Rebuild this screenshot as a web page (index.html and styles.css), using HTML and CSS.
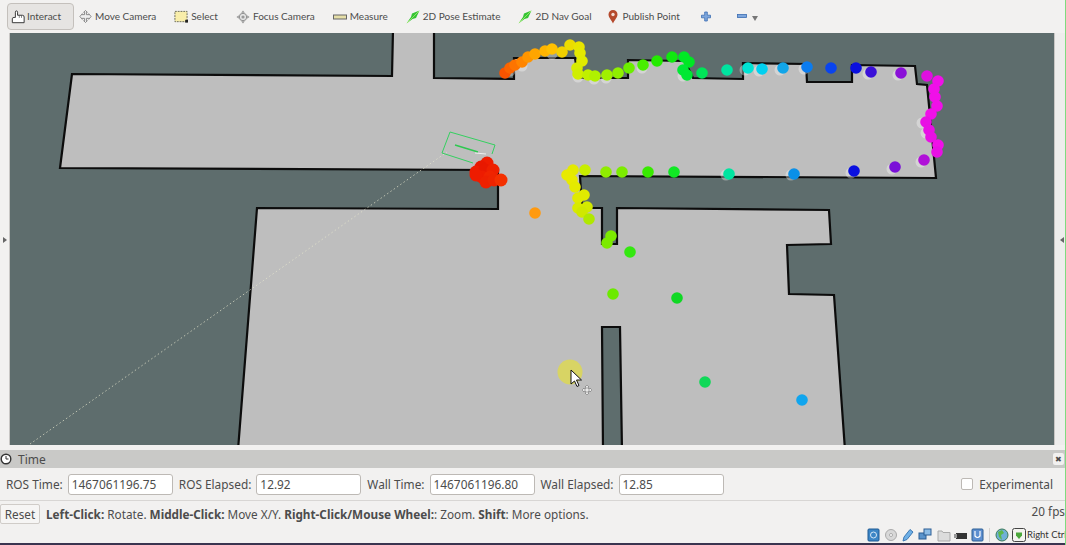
FILE: index.html
```html
<!DOCTYPE html>
<html lang="en">
<head>
    <meta charset="UTF-8">
    <meta name="viewport" content="width=device-width, initial-scale=1.0">
    <title>RViz</title>
    <link rel="stylesheet" href="styles.css">
</head>
<body>
    <div class="app">
        <div class="toolbar">
            <div class="tool tool-active">
                <svg class="icon" viewBox="0 0 16 16"><path d="M1.500 14.500v-4.500q0-1.500 2-1.500h1.500v-6q0-1.500 1.200-1.500t1.300 1.500v3.500h5.500q2 0 2 2v6.500z" fill="#fff" stroke="#333" stroke-width="1.100"/><path d="M9.500 6v3M12 6v3" stroke="#555" stroke-width=".8"/></svg>
                <span>Interact</span>
            </div>
            <div class="tool">
                <svg class="icon icon-move" viewBox="0 0 14 14"><path d="M7 .5l2 2H8v2.500h2.500V4l2.500 3-2.500 3V9H8v2.500h1l-2 2-2-2h1V9H3.500v1L1 7l2.500-3v1H6V2.500H5z" fill="#eee" stroke="#777" stroke-width=".9"/></svg>
                <span>Move Camera</span>
            </div>
            <div class="tool">
                <svg class="icon" viewBox="0 0 15 14"><rect x="1" y="1" width="13" height="11" fill="#f9eeaa" stroke="#665" stroke-width="1" stroke-dasharray="2 1"/><rect x="12" y="10" width="3" height="3" fill="#222"/></svg>
                <span>Select</span>
            </div>
            <div class="tool">
                <svg class="icon" viewBox="0 0 15 15"><path d="M7.500 .5l2 2.500h-4zM7.500 14.500l2-2.500h-4zM.5 7.500l2.500-2v4zM14.500 7.500l-2.500-2v4z" fill="#999"/><circle cx="7.500" cy="7.500" r="4" fill="#e4e4e4" stroke="#888"/><circle cx="7.500" cy="7.500" r="1.700" fill="#999"/></svg>
                <span>Focus Camera</span>
            </div>
            <div class="tool">
                <svg class="icon" viewBox="0 0 14 14"><rect x=".5" y="5" width="13" height="4" fill="#e6dfa8" stroke="#666"/></svg>
                <span>Measure</span>
            </div>
            <div class="tool">
                <svg class="icon" viewBox="0 0 14 14"><path d="M.5 13.500L5 7l1-3.500L13.500 .5 10 8 6.500 9z" fill="#35c435"/><path d="M1 13L13 1" stroke="#a4ee70" stroke-width=".8"/></svg>
                <span>2D Pose Estimate</span>
            </div>
            <div class="tool">
                <svg class="icon" viewBox="0 0 14 14"><path d="M.5 13.500L5 7l1-3.500L13.500 .5 10 8 6.500 9z" fill="#35c435"/><path d="M1 13L13 1" stroke="#a4ee70" stroke-width=".8"/></svg>
                <span>2D Nav Goal</span>
            </div>
            <div class="tool tool-pin">
                <svg class="icon-pin" viewBox="0 0 10 14"><path d="M5 13.500C3.500 10 .5 7.500 .5 4.500a4.500 4.500 0 0 1 9 0C9.500 7.500 6.500 10 5 13.500z" fill="#b5492c"/><circle cx="5" cy="4.500" r="1.700" fill="#f3dcd2"/></svg>
                <span>Publish Point</span>
            </div>
            <svg class="icon-plus" viewBox="0 0 10 10"><path d="M3.700.5h2.600v3.200h3.200v2.600H6.300v3.200H3.700V6.300H.5V3.700h3.200z" fill="#7ea6dc" stroke="#3b6db2" stroke-width=".8"/></svg>
            <svg class="icon-minus" viewBox="0 0 10 4"><rect x=".5" y=".5" width="9" height="3" fill="#7ea6dc" stroke="#3b6db2" stroke-width=".8"/></svg>
            <div class="dropdown-arrow"></div>
        </div>

        <div class="middle">
            <div class="side side-left"><div class="arrow-right"></div></div>
            <svg class="view" viewBox="10 33 1044 412">
                <path class="floor" d="M72 74L392 76L393 30L434 30L434 78L514 79L514 58L575 58L578 78L628 78L628 60L685 61L693 78L743 79L743 63L806 64L807 82L852 82L852 65L915 66L917 84L927 85L936 178L580 176L582 208L602 208L602 244L617 244L617 208L829 210L831 244L787 245L789 294L834 295L845 450L622 450L620 327L602 327L603 450L238 450L257 208L498 209L498 170L60 168Z"/>

                <path class="beam" d="M30 444L447 152"/>
                <path class="footprint" d="M473 163L442 153L450 132L495 145L492 154"/>
                <path class="footprint-arrow" d="M455 145L478 152"/>
                <path class="footprint-tip" d="M475 153L486 154"/>

                <g class="ghosts">
                    <circle cx="510" cy="71"/><circle cx="522" cy="66"/><circle cx="552" cy="54"/>
                    <circle cx="578" cy="77"/><circle cx="594" cy="79"/><circle cx="606" cy="78"/>
                    <circle cx="642" cy="68"/><circle cx="683" cy="76"/><circle cx="745" cy="70"/>
                    <circle cx="759" cy="71"/><circle cx="780" cy="70"/><circle cx="804" cy="69"/>
                    <circle cx="898" cy="75"/><circle cx="868" cy="74"/><circle cx="921" cy="162"/>
                    <circle cx="892" cy="169"/><circle cx="851" cy="173"/><circle cx="791" cy="175"/>
                    <circle cx="922" cy="123"/><circle cx="926" cy="133"/><circle cx="726" cy="175"/>
                </g>

                <g class="points">
                    <circle cx="505" cy="73" fill="#f85400"/><circle cx="510" cy="68" fill="#fb6400"/><circle cx="515" cy="65" fill="#fd7400"/>
                    <circle cx="522" cy="62" fill="#ff8500"/><circle cx="528" cy="57" fill="#ff9500"/><circle cx="535" cy="54" fill="#ffa500"/>
                    <circle cx="545" cy="51" fill="#ffb400"/><circle cx="552" cy="49" fill="#ffc000"/><circle cx="562" cy="52" fill="#f2d000"/>
                    <circle cx="570" cy="45" fill="#ecdc00"/><circle cx="579" cy="47" fill="#e8e400"/><circle cx="580" cy="53" fill="#e4e800"/>
                    <circle cx="582" cy="61" fill="#e0ea00"/><circle cx="577" cy="68" fill="#d8ec00"/><circle cx="578" cy="74" fill="#d0ee00"/>
                    <circle cx="588" cy="75" fill="#c0f000"/><circle cx="595" cy="76" fill="#b0f000"/><circle cx="607" cy="75" fill="#a0f000"/>
                    <circle cx="618" cy="73" fill="#90f000"/><circle cx="629" cy="68" fill="#6cee00"/><circle cx="643" cy="65" fill="#48ee00"/>
                    <circle cx="657" cy="61" fill="#24ea00"/><circle cx="672" cy="57" fill="#10e810"/><circle cx="684" cy="57" fill="#00e824"/>
                    <circle cx="689" cy="62" fill="#00e824"/><circle cx="683" cy="70" fill="#00e834"/><circle cx="687" cy="75" fill="#00e834"/>
                    <circle cx="702" cy="73" fill="#00e458"/><circle cx="727" cy="70" fill="#00e4a0"/><circle cx="748" cy="68" fill="#00e4d4"/>
                    <circle cx="762" cy="69" fill="#00d0f0"/><circle cx="783" cy="68" fill="#11a5e8"/><circle cx="807" cy="67" fill="#0a7cf0"/>
                    <circle cx="831" cy="68" fill="#0a44ee"/><circle cx="856" cy="68" fill="#0a10e0"/><circle cx="871" cy="72" fill="#3a10d8"/>
                    <circle cx="901" cy="73" fill="#8a10d8"/><circle cx="927" cy="76" fill="#e010e0"/><circle cx="938" cy="81" fill="#f010e8"/>
                    <circle cx="934" cy="89" fill="#f010e8"/><circle cx="935" cy="97" fill="#f010e8"/><circle cx="937" cy="106" fill="#f010e8"/>
                    <circle cx="931" cy="114" fill="#f010e8"/><circle cx="926" cy="122" fill="#e810e4"/><circle cx="929" cy="130" fill="#e810e4"/>
                    <circle cx="931" cy="137" fill="#e810e4"/><circle cx="938" cy="145" fill="#f010e8"/><circle cx="937" cy="152" fill="#e810e4"/>
                    <circle cx="924" cy="160" fill="#b010d8"/><circle cx="895" cy="167" fill="#7a10d8"/><circle cx="854" cy="171" fill="#0a10e0"/>
                    <circle cx="794" cy="174" fill="#0a90e8"/><circle cx="729" cy="174" fill="#00e4a0"/>
                    <circle cx="674" cy="172" fill="#10e824"/><circle cx="648" cy="172" fill="#38ea00"/><circle cx="622" cy="172" fill="#7cec00"/>
                    <circle cx="606" cy="172" fill="#90ec00"/><circle cx="585" cy="170" fill="#c8ee00"/><circle cx="573" cy="170" fill="#e4ea00"/>
                    <circle cx="567" cy="175" fill="#e8ea00"/><circle cx="572" cy="180" fill="#e8ea00"/><circle cx="575" cy="187" fill="#e4ea00"/>
                    <circle cx="584" cy="195" fill="#e0ea00"/><circle cx="578" cy="198" fill="#e0ea00"/><circle cx="587" cy="207" fill="#d4ea00"/>
                    <circle cx="578" cy="208" fill="#d8ea00"/><circle cx="582" cy="212" fill="#d0e800"/><circle cx="589" cy="219" fill="#b0e800"/>
                    <circle cx="611" cy="236" fill="#7cea00"/><circle cx="607" cy="243" fill="#7cea00"/><circle cx="630" cy="252" fill="#34e810"/>
                    <circle cx="613" cy="294" fill="#6cea00"/><circle cx="677" cy="298" fill="#10d824"/><circle cx="705" cy="382" fill="#10d858"/>
                    <circle cx="802" cy="400" fill="#10a5ee"/><circle cx="535" cy="213" fill="#ff9a10"/>
                </g>

                <g class="cluster">
                    <circle cx="487" cy="163" fill="#ee1c00"/><circle cx="481" cy="167" fill="#e81800"/><circle cx="476" cy="172" fill="#ee1c00"/>
                    <circle cx="485" cy="170" fill="#e81800"/><circle cx="493" cy="170" fill="#ee2000"/><circle cx="482" cy="177" fill="#ee1c00"/>
                    <circle cx="490" cy="177" fill="#f02400"/><circle cx="476" cy="175" fill="#ee1c00"/><circle cx="486" cy="182" fill="#ee2000"/>
                    <circle cx="494" cy="180" fill="#ee2400"/><circle cx="501" cy="180" fill="#f43000"/>
                </g>

                <circle class="click-spot" cx="570" cy="372" r="12.500"/>
                <path class="cursor" d="M571 370v14l3.500-3 2.500 5.500 2-1-2.500-5.500h5z"/>
                <path class="cursor-move" d="M587 385l2 2h-1v2h2v-1l2 2-2 2v-1h-2v2h1l-2 2-2-2h1v-2h-2v1l-2-2 2-2v1h2v-2h-1z"/>
            </svg>
            <div class="side side-right"><div class="arrow-left"></div></div>
        </div>

        <div class="gutter"></div>

        <div class="panel-title">
            <svg class="clock" viewBox="0 0 12 12"><circle cx="6" cy="6" r="4.800" fill="#fff" stroke="#333" stroke-width="1.400"/><path d="M6 3v3h2.500" fill="none" stroke="#333"/></svg>
            <span>Time</span>
            <div class="close">&#10006;</div>
        </div>

        <div class="time-row">
            <label>ROS Time:</label>
            <input type="text" value="1467061196.75">
            <label>ROS Elapsed:</label>
            <input type="text" value="12.92">
            <label>Wall Time:</label>
            <input type="text" value="1467061196.80">
            <label>Wall Elapsed:</label>
            <input type="text" value="12.85">
            <div class="experimental">
                <span class="checkbox"></span>
                <label>Experimental</label>
            </div>
        </div>

        <div class="help-row">
            <button>Reset</button>
            <p class="help"><b>Left-Click:</b> Rotate. <b>Middle-Click:</b> Move X/Y. <b>Right-Click/Mouse Wheel:</b>: Zoom. <b>Shift</b>: More options.</p>
            <span class="fps">20 fps</span>
        </div>

        <div class="host-bar">
            <svg class="host-icons" viewBox="-3 0 120 14">
                <rect x="1" y="1" width="11" height="12" rx="1" fill="#3c86c6" stroke="#1f5a94"/><circle cx="6.500" cy="7" r="3" fill="none" stroke="#d6e8f6"/>
                <circle cx="24" cy="7" r="5.500" fill="#d8d8d8" stroke="#aaa"/><circle cx="24" cy="7" r="1.500" fill="#fff" stroke="#aaa"/>
                <path d="M36 13l1-4 6-7.500 3 2.500-6 7.500z" fill="#6fb0e6" stroke="#3c78b4"/>
                <rect x="52" y="5" width="7" height="6" fill="#5b94cc" stroke="#2d5f94"/><rect x="57" y="1" width="7" height="6" fill="#8cbce6" stroke="#2d5f94"/>
                <path d="M71 3h4l1 1.500h7V13H71z" fill="#dcdcdc" stroke="#aaa"/>
                <rect x="89" y="5" width="11" height="6" fill="#333"/><rect x="87" y="6" width="3" height="4" fill="#999"/>
                <rect x="105" y="1" width="11" height="12" rx="1" fill="#5e8fd0" stroke="#2d5f94"/><path d="M108 3v5q2.500 3 5 0V3" fill="none" stroke="#fff" stroke-width="1.200"/>
            </svg>
            <div class="host-sep"></div>
            <svg class="host-globe" viewBox="0 0 14 14"><circle cx="7" cy="7" r="6" fill="#6fb0d8" stroke="#3c7a58"/><path d="M3 4l4-2 2 3-3 2 1 5-3-3z" fill="#5cb84c"/></svg>
            <svg class="host-key" viewBox="0 0 14 14"><rect x=".5" y=".5" width="13" height="13" rx="2" fill="#f4f4f0" stroke="#444"/><path d="M4 4.500h6v3L7 11 4 7.500z" fill="#4ca83c"/></svg>
            <span class="host-key-label">Right Ctrl</span>
        </div>
        <div class="desktop-edge"></div>
    </div>
</body>
</html>
```

FILE: styles.css
```css
* {
    box-sizing: border-box;
}

html, body {
    margin: 0;
    height: 100%;
    overflow: hidden;
}

body {
    font-family: "Noto Sans", sans-serif;
    font-size: 11.76px;
    color: #4c4c4c;
    background-color: #f2f1f0;
}

.app {
    display: flex;
    flex-direction: column;
    width: 1066px;
    height: 545px;
    border-right: 1px solid #7fdc7f;
    overflow: hidden;
}

/* toolbar */
.toolbar {
    display: flex;
    align-items: center;
    height: 33px;
    padding-left: 7px;
    flex-shrink: 0;
    font-family: Lato, sans-serif;
    font-size: 10px;
    gap: 18px;
}

.tool {
    display: flex;
    align-items: center;
    gap: 3px;
    white-space: nowrap;
}

.tool span {
    margin-bottom: 1px;
}

.tool-active {
    width: 67px;
    height: 27px;
    padding-left: 3px;
    gap: 2px;
    margin-right: -13px;
    border: 1px solid #c4c0bc;
    border-radius: 4px;
    background-color: #e6e4e2;
}

.icon {
    width: 14px;
    height: 14px;
}

.icon-move {
    width: 13px;
    height: 13px;
}

.tool-pin {
    gap: 5px;
    margin-left: -2px;
}

.icon-pin {
    width: 10px;
    height: 14px;
}

.icon-plus {
    width: 10px;
    height: 11px;
    margin-left: 3px;
}

.icon-minus {
    width: 10px;
    height: 4px;
    margin-left: 8px;
    margin-bottom: 1px;
}

.dropdown-arrow {
    width: 0;
    height: 0;
    margin: 4px 0 0 -13px;
    border-left: 3.500px solid transparent;
    border-right: 3.500px solid transparent;
    border-top: 5px solid #777;
}

/* 3d view */
.middle {
    display: flex;
    height: 412px;
    flex-shrink: 0;
}

.side {
    display: flex;
    align-items: center;
    width: 10px;
    padding-top: 2px;
    flex-shrink: 0;
}

.side-left {
    border-right: 1px solid #c8c6c4;
    padding-left: 3px;
}

.side-right {
    width: 11px;
    border-left: 1px solid #c8c6c4;
    background-color: #eeedec;
    justify-content: flex-end;
}

.arrow-right {
    border-top: 3px solid transparent;
    border-bottom: 3px solid transparent;
    border-left: 4px solid #666;
}

.arrow-left {
    border-top: 3px solid transparent;
    border-bottom: 3px solid transparent;
    border-right: 4px solid #666;
    margin-right: 1px;
}

.view {
    flex: 1;
    height: 412px;
    background-color: #5e6d6d;
}

.floor {
    fill: #bebebe;
    stroke: #0c0c0c;
    stroke-width: 2.200;
}

.beam {
    stroke: #e8e8d0;
    stroke-width: 1;
    stroke-dasharray: 1.500 2.500;
    opacity: .7;
}

.footprint {
    fill: none;
    stroke: #35d060;
    stroke-width: 1;
}

.footprint-arrow {
    stroke: #2ec850;
    stroke-width: 1.500;
}

.footprint-tip {
    stroke: #eee;
    stroke-width: 1;
}

.ghosts circle {
    r: 5.500px;
    fill: #fff;
    opacity: .35;
}

.points circle {
    r: 5.800px;
}

.cluster circle {
    r: 6.500px;
}

.click-spot {
    fill: #d8d464;
}

.cursor {
    fill: #fff;
    stroke: #111;
    stroke-width: 1;
}

.cursor-move {
    fill: #e8e8e8;
    stroke: #777;
    stroke-width: .6;
}

/* time panel */
.gutter {
    height: 5px;
    flex-shrink: 0;
}

.panel-title {
    display: flex;
    align-items: center;
    height: 18px;
    flex-shrink: 0;
    background-color: #c9c9c7;
    font-size: 12px;
}

.clock {
    width: 12px;
    height: 12px;
    margin-right: 6px;
}

.close {
    margin-left: auto;
    margin-right: 1px;
    width: 11px;
    height: 12px;
    line-height: 12px;
    text-align: center;
    font-size: 8px;
    border-radius: 2px;
    background-color: #f2f1f0;
}

.time-row {
    display: flex;
    align-items: center;
    height: 33px;
    flex-shrink: 0;
    padding: 0 12px 0 6px;
    gap: 5px;
    font-size: 11.85px;
    border-bottom: 1px solid #d8d6d4;
}

.time-row input {
    width: 105px;
    height: 21px;
    margin-right: 1px;
    padding: 0 3px;
    border: 1px solid #bdb9b5;
    border-radius: 3px;
    background-color: #fff;
    font: inherit;
    color: #4c4c4c;
}

.experimental {
    display: flex;
    align-items: center;
    margin-left: auto;
    gap: 6px;
}

.checkbox {
    width: 12px;
    height: 12px;
    border: 1px solid #bdb9b5;
    border-radius: 2px;
    background-color: #fff;
}

.help-row {
    display: flex;
    align-items: center;
    height: 25px;
    padding-top: 1px;
    flex-shrink: 0;
}

.help-row button {
    width: 40px;
    height: 20px;
    padding: 0;
    border: 1px solid #d0ccc8;
    border-radius: 2px;
    background-color: #f6f5f4;
    font: inherit;
    color: #4c4c4c;
}

.help {
    margin: 0 0 0 6px;
    white-space: nowrap;
}

.fps {
    margin-left: auto;
    padding-bottom: 6px;
    white-space: nowrap;
}

.host-bar {
    display: flex;
    align-items: center;
    justify-content: flex-end;
    height: 17px;
    flex-shrink: 0;
    font-family: Lato, sans-serif;
    font-size: 9.5px;
    color: #333;
    overflow: hidden;
}

.host-icons {
    width: 120px;
    height: 14px;
}

.host-sep {
    width: 1px;
    height: 14px;
    margin: 0 5px;
    background-color: #d4d2d0;
}

.host-globe {
    width: 14px;
    height: 14px;
    margin-right: 3px;
}

.host-key {
    width: 14px;
    height: 14px;
    margin-right: 1px;
}

.host-key-label {
    width: 38px;
    white-space: nowrap;
}

.desktop-edge {
    height: 2px;
    flex-shrink: 0;
    background-color: #3a3450;
}
```
